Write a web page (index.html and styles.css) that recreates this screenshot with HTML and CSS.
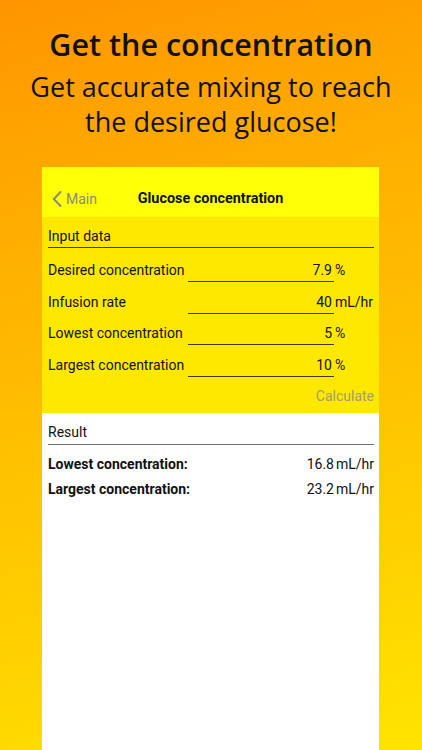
FILE: index.html
```html
<!DOCTYPE html>
<html lang="en">
<head>
<meta charset="utf-8">
<title>Glucose concentration</title>
<link rel="stylesheet" href="styles.css">
</head>
<body>
<div class="page">
  <header class="promo">
    <h1 class="promo-title">Get the concentration</h1>
    <p class="promo-sub">Get accurate mixing to reach<br>the desired glucose!</p>
  </header>
  <div class="phone">
    <nav class="navbar">
      <div class="back">
        <svg class="chev" width="10" height="16" viewBox="0 0 10 16"><path d="M8.5 1 L1.8 8 L8.5 15" fill="none" stroke="#8a8a78" stroke-width="2" stroke-linecap="round" stroke-linejoin="round"/></svg>
        <span>Main</span>
      </div>
      <div class="nav-title">Glucose concentration</div>
      <div></div>
    </nav>
    <section class="input-sec">
      <div class="sec-head dark">Input data</div>
      <div class="rows">
        <div class="row"><span class="lbl">Desired concentration</span><span class="field">7.9</span><span class="unit">%</span></div>
        <div class="row"><span class="lbl">Infusion rate</span><span class="field">40</span><span class="unit">mL/hr</span></div>
        <div class="row"><span class="lbl">Lowest concentration</span><span class="field">5</span><span class="unit">%</span></div>
        <div class="row"><span class="lbl">Largest concentration</span><span class="field">10</span><span class="unit">%</span></div>
      </div>
      <div class="calc">Calculate</div>
    </section>
    <section class="result-sec">
      <div class="sec-head light">Result</div>
      <div class="res-row"><span class="res-lbl">Lowest concentration:</span><span class="res-val">16.8<span class="res-unit">mL/hr</span></span></div>
      <div class="res-row"><span class="res-lbl">Largest concentration:</span><span class="res-val">23.2<span class="res-unit">mL/hr</span></span></div>
    </section>
  </div>
</div>
</body>
</html>
```
FILE: styles.css
```css
html, body {
  margin: 0;
  padding: 0;
}
body {
  width: 422px;
  height: 750px;
  overflow: hidden;
  background: linear-gradient(165deg, #ff9500 0%, #ffb400 35%, #ffd000 75%, #ffe400 100%);
}
.page {
  display: flex;
  flex-direction: column;
  height: 750px;
}
.promo {
  padding-top: 24px;
  text-align: center;
  color: #111;
  font-family: "Open Sans", "Liberation Sans", sans-serif;
}
.promo-title {
  margin: 0;
  font-size: 30.5px;
  line-height: 40px;
  font-weight: 600;
}
.promo-sub {
  margin: 5px 0 0;
  font-size: 27px;
  line-height: 35px;
  font-weight: 400;
}
.phone {
  margin: 28px 0 0 42px;
  width: 337px;
  flex: 1;
  display: flex;
  flex-direction: column;
  font-family: Roboto, "Liberation Sans", sans-serif;
  font-size: 14px;
  color: #111;
}
.navbar {
  height: 50px;
  box-sizing: border-box;
  padding-top: 13px;
  background: #ffff08;
  display: grid;
  grid-template-columns: 1fr auto 1fr;
  align-items: center;
}
.back {
  display: flex;
  align-items: center;
  gap: 4px;
  padding-left: 10px;
  color: #8a8a78;
  font-size: 14px;
}
.chev {
  display: block;
}
.nav-title {
  font-weight: 700;
  font-size: 14.4px;
  color: #111;
}
.input-sec {
  background: #ffe800;
  padding: 9px 5px 7px 6px;
}
.sec-head {
  line-height: 20px;
  padding-bottom: 1px;
}
.sec-head.dark {
  border-bottom: 1px solid #3c3a14;
}
.rows {
  margin-top: 5px;
}
.row {
  height: 31.5px;
  box-sizing: border-box;
  padding-top: 7px;
  display: grid;
  grid-template-columns: 140px 146px auto;
  align-items: start;
  line-height: 20px;
}
.field {
  text-align: right;
  padding-right: 2px;
  padding-bottom: 1px;
  border-bottom: 1px solid #3c3a14;
}
.unit {
  padding-left: 1px;
}
.calc {
  margin-top: 7px;
  line-height: 20px;
  text-align: right;
  color: #a49e68;
}
.result-sec {
  flex: 1;
  background: #fff;
  padding: 9px 5px 0 6px;
}
.sec-head.light {
  padding-bottom: 2px;
  border-bottom: 1px solid #6e6e6e;
}
.res-row {
  display: flex;
  justify-content: space-between;
  line-height: 20px;
  height: 25px;
}
.sec-head.light + .res-row {
  margin-top: 9px;
}
.res-lbl {
  font-weight: 700;
}
.res-unit {
  margin-left: 2px;
}
```
